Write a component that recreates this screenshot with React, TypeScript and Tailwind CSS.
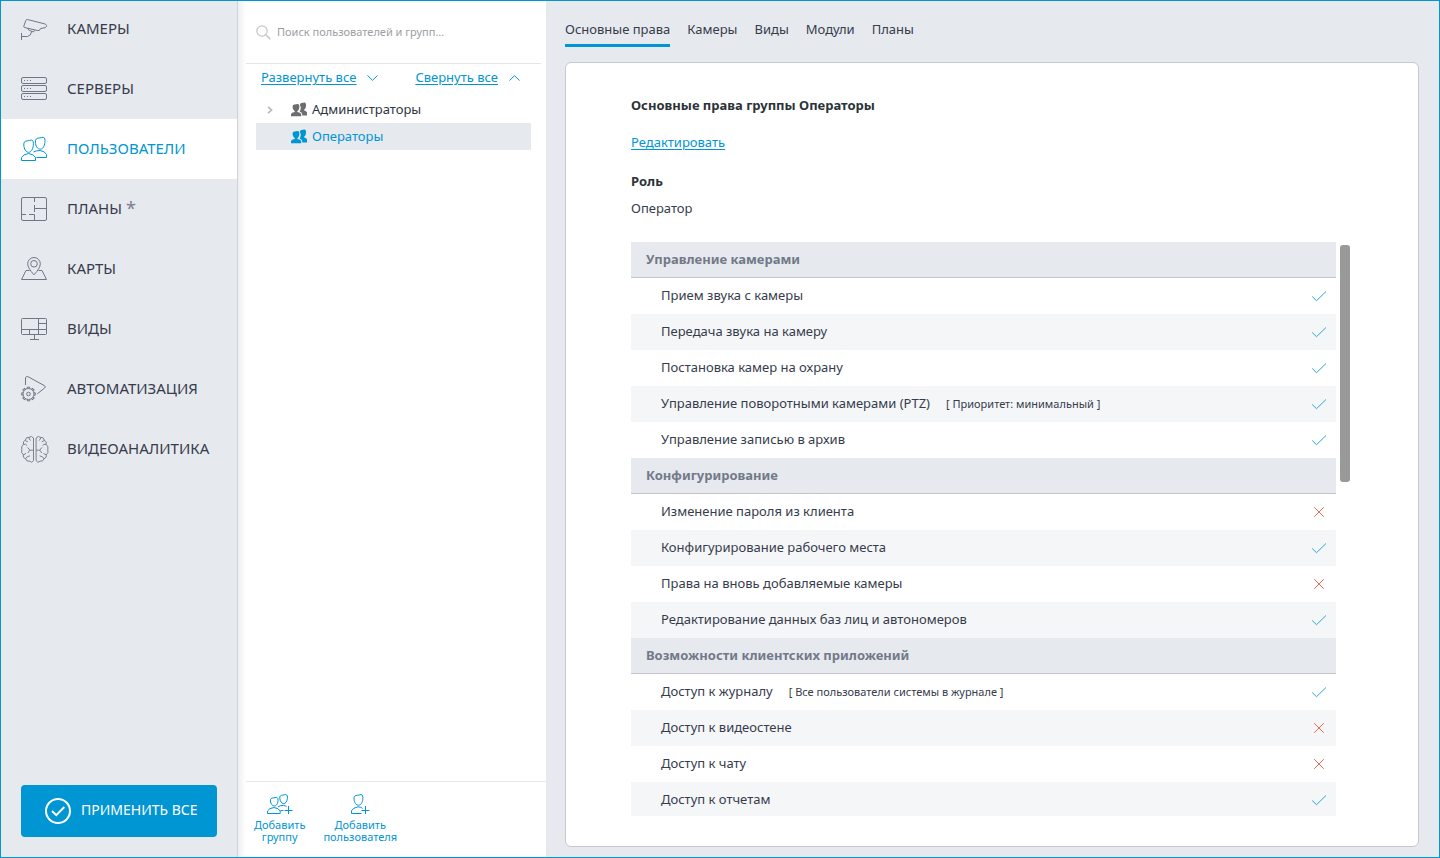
import type { ReactNode } from "react";

type NavItem = { label: string; icon: ReactNode; active?: boolean; changed?: boolean };
type Right = { name: string; note?: string; allowed: boolean };
type Section = { title: string; rights: Right[] };

function NavIcon({ children }: { children: ReactNode }) {
  return (
    <svg className="h-7 w-7 shrink-0 overflow-visible" viewBox="0 0 28 28" fill="none" stroke="currentColor" strokeWidth="1" aria-hidden="true">
      {children}
    </svg>
  );
}

const GEAR_TEETH = [0, 45, 90, 135, 180, 225, 270, 315];

const cameraIcon = (
  <NavIcon>
    <path d="M7.4 4.5Q6.2 4.3 5.8 5.5L3.8 11.2Q3.6 12.3 4.8 12.6L17.8 15.6Q19.8 16 20.4 13.6L25.4 12.6Q26.6 12 26.5 10.4 26.2 9.2 24.5 8.8Z" />
    <path d="M8 13.5Q8.4 15.4 9.8 15.6L13.4 17 14.6 15.2M11.6 16.4Q11.2 20.8 7.5 21.5H1.5M1.5 18V25" />
  </NavIcon>
);
const serverIcon = (
  <NavIcon>
    <rect x="1.5" y="2.5" width="25" height="6" rx="1.5" />
    <rect x="1.5" y="10.5" width="25" height="6" rx="1.5" />
    <rect x="1.5" y="18.5" width="25" height="6" rx="1.5" />
    <path d="M4 5.5h1M7 5.5h1M10 5.5h1M4 13.5h1M7 13.5h1M10 13.5h1M4 21.5h1M7 21.5h1M10 21.5h1" />
  </NavIcon>
);
const usersIcon = (
  <NavIcon>
    <path d="M3.8 10C3.6 7 5 5.8 7.6 5.8 9.4 5.8 10 5 11.6 5.1 13.4 5.4 13.6 7.4 13.3 10.4 12.9 14.4 11 17.3 8.7 17.3 6 17.3 4 14 3.8 10Z" />
    <path d="M15.4 7.2C15.2 4.2 16.6 3 19.2 3 21 3 21.6 2.2 23.2 2.3 25 2.6 25.2 4.6 24.9 7.4 24.5 11.4 22.6 14.2 20.3 14.2 17.6 14.2 15.6 11.2 15.4 7.2Z" />
    <path d="M1.5 25.5V22.5Q3 19.3 8.5 18.5 14 19.3 15.5 22.5V25.5Z" />
    <path d="M13.5 17Q16 15.6 20 15.5 25 16.2 26.5 19.5V22.5H16.5" />
  </NavIcon>
);
const planIcon = (
  <NavIcon>
    <rect x="1.5" y="2.5" width="25" height="23" rx="1.5" />
    <path d="M14.5 2.5V7M14.5 10V17M14.5 13.5H26.5M1.5 19.5H6M9 19.5H14.5V25.5" />
  </NavIcon>
);
const mapIcon = (
  <NavIcon>
    <path d="M14 19.8Q7.7 13 7.7 8.8A6.3 6.3 0 0 1 20.3 8.8Q20.3 13 14 19.8Z" />
    <circle cx="14" cy="8.8" r="3.3" />
    <path d="M9.5 15.5H6L1.5 24.5H26.5L22 15.5H18.5" />
  </NavIcon>
);
const viewIcon = (
  <NavIcon>
    <rect x="1.5" y="3.5" width="25" height="16" rx="1" />
    <path d="M18.5 3.5V19.5M18.5 8.5H26.5M1.5 14.5H26.5M9.5 14.5V19.5M14.5 19.5V24.5M10 24.5H19" />
  </NavIcon>
);
const automationIcon = (
  <NavIcon>
    <path d="M5.5 10V2.8Q6 1.2 7.8 1.6L24.5 10.7Q26 11.8 24.6 13L17.3 18.8" />
    <circle cx="8.5" cy="19" r="5.5" />
    <circle cx="8.5" cy="19" r="1.8" />
    {GEAR_TEETH.map((a) => (
      <path key={a} d="M7.3 13.4V12.2H9.7V13.4" transform={`rotate(${a} 8.5 19)`} />
    ))}
  </NavIcon>
);
const brainHalf =
  "M13.5 3Q11.5 .3 9 2.4 6 1.8 5.4 5 2.6 6.3 3.4 9.4 .8 11.6 1.8 14.6 .8 18 3.2 19.6 2.6 23 5.6 23.8 6.4 26.8 9.6 26.2 12 28.6 13.5 25.6ZM9 2.4Q8.6 4.6 10.8 5.4M5.4 5Q5.8 6.8 7.8 6.6M3.4 9.4Q6 8.6 7 10.6M13.4 15.2H9.8L7.6 12.4M9.8 15.2 7.8 18M3.2 19.6Q5.4 19.8 6 18M5.6 23.8Q6.6 21.2 10 20.8";
const brainIcon = (
  <NavIcon>
    <g strokeWidth=".9">
      <path d={brainHalf} />
      <path d={brainHalf} transform="translate(29.6 0) scale(-1 1)" />
    </g>
  </NavIcon>
);

const NAV: NavItem[] = [
  { label: "КАМЕРЫ", icon: cameraIcon },
  { label: "СЕРВЕРЫ", icon: serverIcon },
  { label: "ПОЛЬЗОВАТЕЛИ", icon: usersIcon, active: true },
  { label: "ПЛАНЫ", icon: planIcon, changed: true },
  { label: "КАРТЫ", icon: mapIcon },
  { label: "ВИДЫ", icon: viewIcon },
  { label: "АВТОМАТИЗАЦИЯ", icon: automationIcon },
  { label: "ВИДЕОАНАЛИТИКА", icon: brainIcon },
];

const TABS = ["Основные права", "Камеры", "Виды", "Модули", "Планы"];

const SECTIONS: Section[] = [
  {
    title: "Управление камерами",
    rights: [
      { name: "Прием звука с камеры", allowed: true },
      { name: "Передача звука на камеру", allowed: true },
      { name: "Постановка камер на охрану", allowed: true },
      { name: "Управление поворотными камерами (PTZ)", note: "[ Приоритет: минимальный ]", allowed: true },
      { name: "Управление записью в архив", allowed: true },
    ],
  },
  {
    title: "Конфигурирование",
    rights: [
      { name: "Изменение пароля из клиента", allowed: false },
      { name: "Конфигурирование рабочего места", allowed: true },
      { name: "Права на вновь добавляемые камеры", allowed: false },
      { name: "Редактирование данных баз лиц и автономеров", allowed: true },
    ],
  },
  {
    title: "Возможности клиентских приложений",
    rights: [
      { name: "Доступ к журналу", note: "[ Все пользователи системы в журнале ]", allowed: true },
      { name: "Доступ к видеостене", allowed: false },
      { name: "Доступ к чату", allowed: false },
      { name: "Доступ к отчетам", allowed: true },
    ],
  },
];

function Sidebar() {
  return (
    <aside className="flex w-[237px] shrink-0 flex-col border-r border-[#cfd2da] bg-[#e6e9ee]">
      <nav className="-mt-0.5 flex flex-col">
        {NAV.map((item) => (
          <a
            key={item.label}
            href="#"
            aria-current={item.active ? "page" : undefined}
            className={`flex h-15 items-center gap-[19px] pl-[19px] text-[15px] leading-5 ${item.active ? "bg-white text-[#0095d3]" : "text-[#6f7685]"}`}
          >
            {item.icon}
            <span className={`flex pb-0.5 ${item.active ? "" : "text-[#363c4c]"}`}>
              {item.label}
              {item.changed && <span className="ml-1 text-[18px] text-[#7a8090]">*</span>}
            </span>
          </a>
        ))}
      </nav>
      <div className="mt-auto p-5">
        <button type="button" className="flex h-[52px] w-full items-center gap-2.5 rounded bg-[#0095d3] pl-6 text-[14px] leading-5 text-white">
          <svg className="h-[26px] w-[26px]" viewBox="0 0 26 26" fill="none" stroke="currentColor" strokeWidth="2" aria-hidden="true">
            <circle cx="13" cy="13" r="12" />
            <path d="M7 13 11.3 17.2 19.3 9" />
          </svg>
          <span className="pb-0.5">ПРИМЕНИТЬ ВСЕ</span>
        </button>
      </div>
    </aside>
  );
}

function GroupIcon() {
  return (
    <svg className="h-4 w-4 shrink-0" viewBox="0 0 16 16" fill="currentColor" aria-hidden="true">
      <path d="M9 2.8C9 1.4 10 1 11.2 1 12.2 1 12.6 .5 13.6 .6 15 .9 15.2 2.2 15 4 14.8 5.8 14.2 7 13.2 7.6V8.5Q15.6 8.9 16 10.4V13.6H11.2V12Q10.9 10.3 8.6 9.5 9.8 8 9.8 5.6 9.6 4.2 9 3.6Z" />
      <path d="M1.6 4.6C1.6 3 2.6 2.4 4 2.4 5 2.4 5.6 1.9 6.6 2 8.2 2.2 8.6 3.6 8.3 5.4 8 7.4 7.4 8.6 6.3 9.2V10Q9.8 10.4 10.2 12V14.3H0V12Q.4 10.4 3.8 10V9.2C2.4 8.4 1.6 6.6 1.6 4.6Z" />
    </svg>
  );
}

function UsersPanel() {
  return (
    <section className="flex w-[308px] shrink-0 bg-white">
      <div className="w-2 shrink-0 bg-linear-to-r from-[#eeeff3] to-white" />
      <div className="flex min-w-0 flex-1 flex-col">
        <label className="mr-[5px] flex h-[63px] items-center gap-1.5 border-b border-[#e4e6e9] pl-2.5 text-[#c3c5c9]">
          <svg className="h-[15px] w-[15px] shrink-0" viewBox="0 0 15 15" fill="none" stroke="currentColor" strokeWidth="1.2" aria-hidden="true">
            <circle cx="6" cy="6" r="5.2" />
            <path d="M9.8 9.8 14.3 14.3" strokeWidth="1.6" />
          </svg>
          <input
            type="search"
            aria-label="Поиск пользователей и групп"
            placeholder="Поиск пользователей и групп..."
            className="min-w-0 flex-1 bg-transparent text-[11px] text-[#363c4c] outline-none placeholder:text-[#9c9ea3]"
          />
        </label>
        <div className="flex items-center justify-between pl-[15px] pr-[26px] pt-[3px] text-[13px] leading-5 text-[#0095d3]">
          <button type="button" className="flex items-center gap-[11px]">
            <span className="underline underline-offset-2">Развернуть все</span>
            <svg className="mt-0.5 h-1.5 w-[11px]" viewBox="0 0 11 6" fill="none" stroke="currentColor" aria-hidden="true">
              <path d="M.5 .5 5.5 5.3 10.5 .5" />
            </svg>
          </button>
          <button type="button" className="flex items-center gap-[11px]">
            <span className="underline underline-offset-2">Свернуть все</span>
            <svg className="mt-0.5 h-1.5 w-[11px]" viewBox="0 0 11 6" fill="none" stroke="currentColor" aria-hidden="true">
              <path d="M.5 5.5 5.5 .7 10.5 5.5" />
            </svg>
          </button>
        </div>
        <ul className="ml-2.5 mr-[15px] mt-[9px] text-[13px]">
          <li className="flex h-[27px] items-center pl-[11px] text-[#2f3441]">
            <button type="button" aria-label="Развернуть группу Администраторы" className="w-6 text-[#b5b7bc]">
              <svg className="h-2 w-[6px]" viewBox="0 0 6 8" fill="none" stroke="currentColor" strokeWidth="1.6" aria-hidden="true">
                <path d="M1 .8 4.6 4 1 7.2" />
              </svg>
            </button>
            <span className="flex items-center gap-[5px]">
              <span className="text-[#6d6d6d]">
                <GroupIcon />
              </span>
              Администраторы
            </span>
          </li>
          <li className="flex h-[27px] items-center gap-[5px] bg-[#e6e9ee] pl-[35px] text-[#0095d3]">
            <GroupIcon />
            Операторы
          </li>
        </ul>
        <div className="mt-auto flex h-[76px] items-start gap-[18px] border-t border-[#e6e8ea] pl-2 pt-3 text-[11px] leading-3 text-[#0095d3]">
          <button type="button" className="flex flex-col items-center gap-[5px]">
            <svg className="h-5 w-[26px]" viewBox="0 0 26 20" fill="none" stroke="currentColor" aria-hidden="true">
              <path d="M3.4 7C3.2 4.8 4.4 3.9 6.4 3.9 7.8 3.9 8.2 3.3 9.4 3.4 11 3.7 11.2 5.2 11 7.2 10.6 10.2 9.2 12 7.3 12 5.2 12 3.6 9.8 3.4 7Z" />
              <path d="M12.8 4.2C12.6 2 13.8 1.1 15.8 1.1 17.2 1.1 17.6 .5 18.8 .6 20.4 .9 20.6 2.4 20.4 4.4 20 7.4 18.6 9.6 16.7 9.6 14.6 9.6 13 7.2 12.8 4.2Z" />
              <path d="M.5 19.5V17Q2 14.2 7 13.5 12 14.2 13.2 17V19.5ZM11 12.8Q13 11.4 16.4 11.4 18.4 11.6 19.6 12.6M13.5 16.5H16.5M21.5 12V20M17.5 16.5H25.5" />
            </svg>
            <span>
              Добавить
              <br />
              группу
            </span>
          </button>
          <button type="button" className="flex flex-col items-center gap-[5px]">
            <svg className="h-5 w-5" viewBox="0 0 20 20" fill="none" stroke="currentColor" aria-hidden="true">
              <path d="M4 5C3.8 2.4 5 1.3 7.4 1.3 8.8 1.3 9.6 .5 11 .6 12.8 .9 13 2.6 12.8 5.2 12.4 8.8 10.8 11.2 8.6 11.2 6.2 11.2 4.2 8.6 4 5Z" />
              <path d="M11.5 19.5H1.5V16.6Q3 13.8 8 12.8 11.2 13 12.6 14.4M15.5 12V20M11.5 16.5H19.5" />
            </svg>
            <span>
              Добавить
              <br />
              пользователя
            </span>
          </button>
        </div>
      </div>
    </section>
  );
}

function AccessMark({ allowed }: { allowed: boolean }) {
  return allowed ? (
    <svg className="ml-auto h-4 w-4 text-[#2aa6dc]" viewBox="0 0 16 16" fill="none" stroke="currentColor" role="img" aria-label="Разрешено">
      <path d="M1.2 8.5 5.5 12.7 15 3.5" />
    </svg>
  ) : (
    <svg className="ml-auto h-4 w-4 text-[#ee6a55]" viewBox="0 0 16 16" fill="none" stroke="currentColor" role="img" aria-label="Запрещено">
      <path d="M3.2 3.2 12.8 12.8M12.8 3.2 3.2 12.8" />
    </svg>
  );
}

function RightsTable() {
  return (
    <table className="w-full border-separate border-spacing-0 text-left text-[13px] leading-5">
      {SECTIONS.map((section) => (
        <tbody key={section.title}>
          <tr className="h-9 bg-[#e6e9ee] text-[#727988]">
            <th colSpan={2} scope="rowgroup" className="border-b border-[#c3c6ce] p-0 pb-0.5 pl-[15px] font-bold">
              {section.title}
            </th>
          </tr>
          {section.rights.map((right) => (
            <tr key={right.name} className="h-9 even:bg-white odd:bg-[#f5f6f8]">
              <td className="p-0 pb-0.5 pl-[30px]">
                {right.name}
                {right.note && <span className="ml-4 text-[11px]">{right.note}</span>}
              </td>
              <td className="w-10 p-0 pr-[9px]">
                <AccessMark allowed={right.allowed} />
              </td>
            </tr>
          ))}
        </tbody>
      ))}
    </table>
  );
}

export default function App() {
  return (
    <div className="flex h-screen overflow-hidden border border-[#0095d3] bg-[#e6e9ee] font-['Noto_Sans','Open_Sans',sans-serif] text-[#363c4c]">
      <Sidebar />
      <UsersPanel />
      <main className="flex min-w-0 flex-1 flex-col pb-2.5 pl-[19px] pr-5">
        <nav className="flex gap-[17px] pt-[18px] text-[13px] leading-5">
          {TABS.map((tab, i) => (
            <a
              key={tab}
              href="#"
              aria-current={i === 0 ? "page" : undefined}
              className={`border-b-3 pb-[5px] ${i === 0 ? "border-[#0095d3]" : "border-transparent"}`}
            >
              {tab}
            </a>
          ))}
        </nav>
        <section className="mt-[15px] flex min-h-0 flex-1 flex-col rounded-md border border-[#c5c8cf] bg-white pb-[30px] pl-[65px] pr-[68px] pt-8 text-[13px] leading-5">
          <h1 className="font-bold text-[#2b3338]">Основные права группы Операторы</h1>
          <a href="#" className="mt-[17px] self-start text-[#0095d3] underline underline-offset-2">
            Редактировать
          </a>
          <h2 className="mt-[19px] font-bold text-[#2b3338]">Роль</h2>
          <p className="mt-[7px]">Оператор</p>
          <div className="mt-6 flex min-h-0 flex-1 gap-1">
            <div className="min-w-0 flex-1 overflow-hidden">
              <RightsTable />
            </div>
            <div className="w-2.5 pt-[3px]">
              <div className="h-[237px] rounded-[3px] bg-[#999999]" />
            </div>
          </div>
        </section>
      </main>
    </div>
  );
}
